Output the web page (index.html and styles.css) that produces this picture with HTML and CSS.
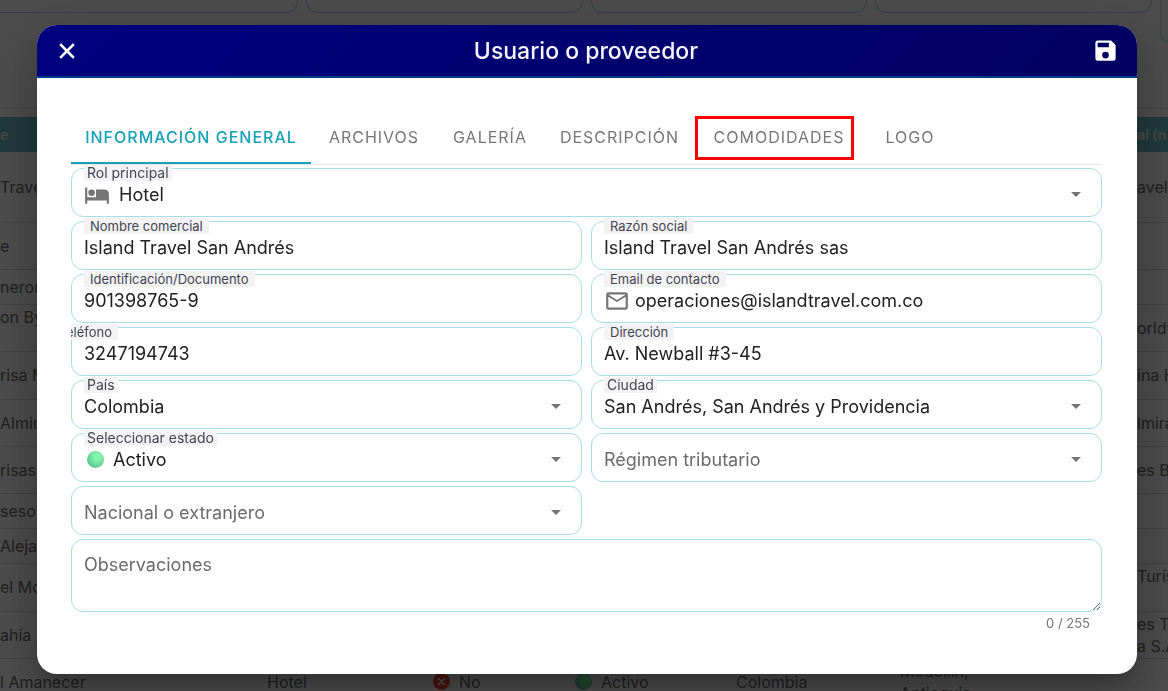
FILE: index.html
```html
<!DOCTYPE html>
<html lang="es">

<head>
    <meta charset="UTF-8">
    <meta name="viewport" content="width=device-width, initial-scale=1">
    <title>Usuario o proveedor</title>
    <link rel="stylesheet" href="styles.css">
</head>

<body>
    <div class="page" aria-hidden="true">
        <div class="filters">
            <div class="filter filter-first"></div>
            <div class="filter"></div>
            <div class="filter"></div>
            <div class="filter"></div>
            <div class="filter filter-last"></div>
        </div>
        <div class="list">
            <table>
                <colgroup>
                    <col class="col-name">
                    <col class="col-rol">
                    <col class="col-nac">
                    <col class="col-estado">
                    <col class="col-pais">
                    <col>
                    <col class="col-social">
                </colgroup>
                <thead>
                    <tr>
                        <th>e</th>
                        <th colspan="5"></th>
                        <th>al (n</th>
                    </tr>
                </thead>
                <tbody>
                    <tr class="row-xl"><td>Travel</td><td colspan="5"></td><td>avel</td></tr>
                    <tr class="row-md"><td>e</td><td colspan="5"></td><td></td></tr>
                    <tr class="row-sm"><td>neron</td><td colspan="5"></td><td></td></tr>
                    <tr class="row-md"><td>on By<br>&nbsp;</td><td colspan="5"></td><td>orldw</td></tr>
                    <tr class="row-lg"><td>risa M</td><td colspan="5"></td><td>ina H</td></tr>
                    <tr class="row-md"><td>Almira</td><td colspan="5"></td><td>lmira</td></tr>
                    <tr class="row-md"><td>risas</td><td colspan="5"></td><td>es Br</td></tr>
                    <tr class="row-sm"><td>seso</td><td colspan="5"></td><td></td></tr>
                    <tr class="row-sm"><td>Alejan</td><td colspan="5"></td><td></td></tr>
                    <tr class="row-lg"><td>el Mo</td><td colspan="5"></td><td>Turís<br>&nbsp;</td></tr>
                    <tr class="row-md"><td>ahía</td><td colspan="5"></td><td>es Tu<br>a S.A</td></tr>
                    <tr class="row-md">
                        <td>l Amanecer</td>
                        <td>Hotel</td>
                        <td>
                            <span class="status">
                                <svg width="17" height="17" viewBox="0 0 17 17"><circle cx="8.5" cy="8.5" r="8.5" fill="#f44336"/><path d="M5 5l7 7M12 5l-7 7" stroke="#fff" stroke-width="1.6"/></svg>
                                No
                            </span>
                        </td>
                        <td><span class="status"><i class="ball"></i>Activo</span></td>
                        <td>Colombia</td>
                        <td>Medellín,<br>Antioquia</td>
                        <td></td>
                    </tr>
                </tbody>
            </table>
        </div>
    </div>

    <div class="overlay">
        <div class="modal" role="dialog" aria-modal="true" aria-labelledby="titulo">
            <header class="modal-header">
                <button type="button" class="icon-btn" aria-label="Cerrar">
                    <svg width="26" height="26" viewBox="0 0 24 24"><path d="M18.3 5.700 12 12l6.300 6.300M5.700 5.700 12 12l-6.300 6.300" fill="none" stroke="#fff" stroke-width="2.400"/></svg>
                </button>
                <h1 id="titulo">Usuario o proveedor</h1>
                <button type="button" class="icon-btn" aria-label="Guardar">
                    <svg width="27" height="27" viewBox="0 0 24 24"><path fill="#fff" d="M17 3H5a2 2 0 0 0-2 2v14a2 2 0 0 0 2 2h14a2 2 0 0 0 2-2V7l-4-4zm-5 16a3 3 0 1 1 0-6 3 3 0 0 1 0 6zm3-10H5V5h10v4z"/></svg>
                </button>
            </header>

            <div class="modal-body">
                <div class="tabs" role="tablist">
                    <button type="button" class="tab active" role="tab" aria-selected="true">INFORMACIÓN GENERAL</button>
                    <button type="button" class="tab" role="tab">ARCHIVOS</button>
                    <button type="button" class="tab" role="tab">GALERÍA</button>
                    <button type="button" class="tab" role="tab">DESCRIPCIÓN</button>
                    <button type="button" class="tab marked" role="tab">COMODIDADES</button>
                    <button type="button" class="tab" role="tab">LOGO</button>
                </div>

                <form class="form">
                    <div class="field full">
                        <label class="label-select" for="rol">Rol principal</label>
                        <svg class="bed" width="26" height="26" viewBox="0 0 24 24"><path fill="#757575" d="M7 13a3 3 0 1 0 0-6 3 3 0 0 0 0 6zm12-6h-8v7H3V5H1v15h2v-3h18v3h2v-9a4 4 0 0 0-4-4z"/></svg>
                        <select id="rol"><option>Hotel</option></select>
                        <svg class="arrow" width="10" height="5" viewBox="0 0 10 5"><path d="M0 0h10L5 5z"/></svg>
                    </div>
                    <div class="field">
                        <label for="nombre">Nombre comercial</label>
                        <input id="nombre" type="text" value="Island Travel San Andrés">
                    </div>
                    <div class="field">
                        <label for="razon">Razón social</label>
                        <input id="razon" type="text" value="Island Travel San Andrés sas">
                    </div>
                    <div class="field">
                        <label for="documento">Identificación/Documento</label>
                        <input id="documento" type="text" value="901398765-9">
                    </div>
                    <div class="field">
                        <label for="email">Email de contacto</label>
                        <svg class="mail" width="26" height="26" viewBox="0 0 24 24"><path fill="#757575" d="M22 6c0-1.100-.9-2-2-2H4c-1.100 0-2 .9-2 2v12c0 1.100.9 2 2 2h16c1.100 0 2-.9 2-2V6zm-2 0-8 5-8-5h16zm0 12H4V8l8 5 8-5v10z"/></svg>
                        <input id="email" type="email" value="operaciones@islandtravel.com.co">
                    </div>
                    <div class="field">
                        <label class="label-cut" for="telefono">Teléfono</label>
                        <input id="telefono" type="tel" value="3247194743">
                    </div>
                    <div class="field">
                        <label for="direccion">Dirección</label>
                        <input id="direccion" type="text" value="Av. Newball #3-45">
                    </div>
                    <div class="field">
                        <label class="label-select" for="pais">País</label>
                        <select id="pais"><option>Colombia</option></select>
                        <svg class="arrow" width="10" height="5" viewBox="0 0 10 5"><path d="M0 0h10L5 5z"/></svg>
                    </div>
                    <div class="field">
                        <label class="label-select" for="ciudad">Ciudad</label>
                        <select id="ciudad"><option>San Andrés, San Andrés y Providencia</option></select>
                        <svg class="arrow" width="10" height="5" viewBox="0 0 10 5"><path d="M0 0h10L5 5z"/></svg>
                    </div>
                    <div class="field">
                        <label class="label-select" for="estado">Seleccionar estado</label>
                        <i class="ball"></i>
                        <select id="estado"><option>Activo</option></select>
                        <svg class="arrow" width="10" height="5" viewBox="0 0 10 5"><path d="M0 0h10L5 5z"/></svg>
                    </div>
                    <div class="field">
                        <select class="empty" aria-label="Régimen tributario"><option>Régimen tributario</option></select>
                        <svg class="arrow" width="10" height="5" viewBox="0 0 10 5"><path d="M0 0h10L5 5z"/></svg>
                    </div>
                    <div class="field">
                        <select class="empty" aria-label="Nacional o extranjero"><option>Nacional o extranjero</option></select>
                        <svg class="arrow" width="10" height="5" viewBox="0 0 10 5"><path d="M0 0h10L5 5z"/></svg>
                    </div>
                    <div class="full">
                        <textarea maxlength="255" placeholder="Observaciones" aria-label="Observaciones"></textarea>
                        <div class="counter">0 / 255</div>
                    </div>
                </form>
            </div>
        </div>
    </div>
</body>

</html>
```
FILE: styles.css
```css
* {
    box-sizing: border-box;
}

body {
    margin: 0;
    height: 100vh;
    overflow: hidden;
    background: #fafafa;
    font-family: Inter, "Noto Sans", sans-serif;
    color: #212121;
}

button,
input,
select,
textarea {
    font: inherit;
    color: inherit;
    border: 0;
    background: none;
    padding: 0;
    margin: 0;
}

/* listado de fondo */
.page {
    height: 100vh;
    overflow: hidden;
    font-size: 16px;
    line-height: 22px;
    color: #6b6b6b;
}

.filters {
    display: grid;
    grid-template-columns: 298px repeat(3, 1fr) 8px;
    gap: 8px;
    align-items: start;
    height: 108px;
}

.filter {
    height: 13px;
    border: 1px solid #a3dfe6;
    border-top: 0;
    border-radius: 0 0 12px 12px;
}

.filter-first {
    border-left: 0;
    border-bottom-left-radius: 0;
}

.filter-last {
    height: 42px;
    border-right: 0;
    border-bottom-right-radius: 0;
}

.list {
    border-top: 1px solid #e4e4e4;
    padding-top: 8px;
}

table {
    width: 100%;
    table-layout: fixed;
    border-collapse: collapse;
}

.col-name {
    width: 267px;
}

.col-rol {
    width: 166px;
}

.col-nac {
    width: 142px;
}

.col-estado {
    width: 161px;
}

.col-pais {
    width: 164px;
}

.col-social {
    width: 31px;
}

th,
td {
    padding: 0;
    text-align: left;
    white-space: nowrap;
    overflow: hidden;
}

th {
    height: 35px;
    background: #68bcc8;
    color: #e8e8e8;
    font-size: 14px;
}

td {
    border-bottom: 1px solid #dcdcdc;
}

.row-sm td {
    height: 35px;
}

.row-md td {
    height: 47px;
}

.row-lg td {
    height: 48px;
}

.row-xl td {
    height: 70px;
}

.status {
    display: flex;
    align-items: center;
    gap: 9px;
}

.ball {
    flex: none;
    width: 17px;
    height: 17px;
    border-radius: 50%;
    background: radial-gradient(circle at 60% 35%, #84f5ac 20%, #63d294 60%, #5a9c94);
}

/* ventana */
.overlay {
    position: fixed;
    inset: 0;
    display: flex;
    align-items: flex-start;
    padding: 25px 31px 17px 37px;
    background: rgba(0, 0, 0, 0.7);
}

.modal {
    flex: 1;
    min-width: 0;
    background: #fff;
    border-radius: 20px;
    overflow: hidden;
    box-shadow: 0 11px 15px -7px rgba(0, 0, 0, 0.2), 0 24px 38px 3px rgba(0, 0, 0, 0.14), 0 9px 46px 8px rgba(0, 0, 0, 0.12);
}

.modal-header {
    display: flex;
    align-items: center;
    justify-content: space-between;
    height: 53px;
    padding: 0 18px 0 17px;
    background: linear-gradient(135deg, #000080, #000060);
    border-bottom: 2px solid #003a8c;
}

.modal-header h1 {
    margin: 0;
    font-size: 23px;
    font-weight: 500;
    color: #f4f4fa;
}

.icon-btn {
    display: flex;
}

.modal-body {
    padding: 34px 35px 41px 34px;
}

.tabs {
    display: grid;
    grid-template-columns: 240px 126px 106px 153px 166px 96px;
    border-bottom: 1px solid #e6e6e6;
}

.tab {
    position: relative;
    height: 52px;
    border-bottom: 2px solid transparent;
    font-size: 16px;
    letter-spacing: 1px;
    color: #777;
    white-space: nowrap;
}

.tab.active {
    color: #17a2b8;
    border-bottom-color: #17a2b8;
    font-weight: 500;
}

.tab.marked::after {
    content: "";
    position: absolute;
    inset: 4px 8px 2px -1px;
    border: 3px solid #f00;
}

.form {
    display: grid;
    grid-template-columns: 1fr 1fr;
    gap: 4px 9px;
    padding-top: 3px;
}

.full {
    grid-column: 1 / -1;
}

.field {
    position: relative;
    display: flex;
    align-items: center;
    height: 49px;
    padding: 4px 20px 0 12px;
    border: 1px solid #a8dde5;
    border-radius: 12px;
}

.field input,
.field select {
    flex: 1;
    min-width: 0;
    height: 30px;
    font-size: 18px;
    outline: 0;
    appearance: none;
}

.field .empty {
    color: #6b6b6b;
}

.field label {
    position: absolute;
    top: -4px;
    left: 12px;
    height: 16px;
    padding: 0 6px;
    background: #f3f3f5;
    font-size: 13px;
    line-height: 16px;
    color: #444450;
    white-space: nowrap;
}

.field .label-select {
    padding: 0 3px;
    font-size: 14px;
}

/* la etiqueta larga queda recortada por el borde izquierdo */
.field .label-cut {
    left: -1px;
    display: flex;
    justify-content: flex-end;
    width: 47px;
    overflow: hidden;
}

.bed {
    margin-right: 9px;
}

.mail {
    margin-right: 5px;
}

.field .ball {
    margin: 0 9px 0 3px;
}

.arrow {
    fill: #757575;
    pointer-events: none;
}

textarea {
    display: block;
    width: 100%;
    height: 73px;
    padding: 13px 12px;
    border: 1px solid #a8dde5;
    border-radius: 12px;
    font-size: 18px;
    line-height: 24px;
    resize: vertical;
    outline: 0;
}

textarea::placeholder {
    color: #6b6b6b;
}

.counter {
    padding: 2px 12px 0 0;
    font-size: 13px;
    line-height: 19px;
    text-align: right;
    color: #757575;
}
```
